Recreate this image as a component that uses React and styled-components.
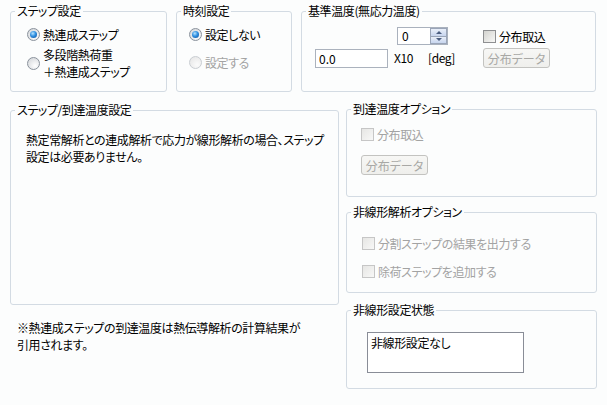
import React from 'react'
import styled, { createGlobalStyle } from 'styled-components'

const GlobalStyle = createGlobalStyle`
  html, body {
    margin: 0;
    padding: 0;
    background: #fcfdfd;
  }
  body {
    font-family: "Noto Sans CJK JP", "Noto Sans", sans-serif;
    font-size: 12px;
    color: #000;
    letter-spacing: -0.4px;
    font-feature-settings: "palt";
  }
`

const Page = styled.div`
  width: 607px;
  height: 405px;
  box-sizing: border-box;
  padding: 4px 0 0 10px;
`

const TopRow = styled.div`
  display: grid;
  grid-template-columns: 157px 116px 295px;
  column-gap: 9px;
`

const MainRow = styled.div`
  display: grid;
  grid-template-columns: 329px 251px;
  column-gap: 7px;
  margin-top: 11px;
`

const Column = styled.div`
  display: flex;
  flex-direction: column;
  margin-top: ${p => p.$mt || 0}px;
`

const Group = styled.fieldset`
  margin: ${p => p.$mt || 0}px 0 0;
  padding: 0;
  min-width: 0;
  box-sizing: border-box;
  height: ${p => p.$h}px;
  border: 1px solid #d3dbe3;
  border-radius: 3px;
`

const Legend = styled.legend`
  margin-left: 4px;
  padding: 0 2px;
  line-height: 14px;
  font-size: 12px;
`

const GroupBody = styled.div`
  display: flex;
  flex-direction: column;
  align-items: flex-start;
  gap: ${p => p.$gap || 0}px;
  padding: ${p => p.$pad};
`

const OptionRow = styled.label`
  display: flex;
  align-items: center;
  gap: 3px;
  line-height: 17px;
  white-space: nowrap;
  color: ${p => (p.$disabled ? '#a3a3a3' : '#000')};
`

const Radio = styled.span`
  position: relative;
  flex: none;
  width: 11px;
  height: 11px;
  border-radius: 50%;
  border: 1px solid ${p => (p.$disabled ? '#c9cdd2' : '#8a929c')};
  background: ${p =>
    p.$disabled
      ? 'radial-gradient(circle at 65% 70%, #fbfbfb, #e4e4e4)'
      : 'radial-gradient(circle at 65% 70%, #ffffff, #cfd2d6)'};
  &::after {
    content: '';
    display: ${p => (p.$checked ? 'block' : 'none')};
    position: absolute;
    inset: 2px;
    border-radius: 50%;
    background: radial-gradient(circle at 40% 35%, #b6e3ff 0, #2f8fe0 45%, #0b4a96 100%);
  }
`

const Check = styled.span`
  flex: none;
  width: 11px;
  height: 11px;
  border: 1px solid ${p => (p.$disabled ? '#c6c6c6' : '#8e8f91')};
  background: ${p =>
    p.$disabled
      ? 'linear-gradient(135deg, #e6e6e4, #f8f8f7)'
      : 'linear-gradient(135deg, #d3d3cf, #f8f8f6)'};
`

const Button = styled.button`
  flex: none;
  width: 67px;
  height: 20px;
  margin-top: ${p => p.$mt || 0}px;
  padding: 0;
  border: 1px solid #c3c3c0;
  border-radius: 3px;
  background: linear-gradient(#f7f7f5, #efefec);
  color: #a8a8a5;
  font: inherit;
  font-size: 12px;
  font-feature-settings: "palt";
`

const BaseGrid = styled.div`
  display: grid;
  grid-template-columns: 73px 83px auto;
  grid-template-rows: 18px 20px;
  column-gap: 6px;
  row-gap: 3px;
  align-items: center;
  padding: 9px 0 0 13px;
`

const Spinner = styled.div`
  display: flex;
  box-sizing: border-box;
  width: 51px;
  height: 18px;
  margin-left: 3px;
  border: 1px solid #a9b1bd;
  background: #fff;
`

const SpinValue = styled.span`
  flex: 1;
  padding-left: 4px;
  line-height: 16px;
`

const SpinButtons = styled.div`
  display: flex;
  flex-direction: column;
  gap: 1px;
  width: 17px;
  padding: 1px;
  box-sizing: border-box;
  background: #9aa5b8;
`

const SpinArrow = styled.span`
  flex: 1;
  display: flex;
  align-items: center;
  justify-content: center;
  background: linear-gradient(#e9eff9, #c7d5ee);
  &::before {
    content: '';
    border-left: 3px solid transparent;
    border-right: 3px solid transparent;
    ${p =>
      p.$down
        ? 'border-top: 3px solid #4a5d80;'
        : 'border-bottom: 3px solid #4a5d80;'}
  }
`

const TextBox = styled.input`
  box-sizing: border-box;
  width: 73px;
  height: 19px;
  margin: 0;
  padding: 0 3px;
  border: 1px solid #abb2bd;
  background: #fff;
  font: inherit;
  font-size: 12px;
  color: #000;
  outline: none;
`

const Units = styled.div`
  display: flex;
  gap: 15px;
  margin-top: -2px;
`

const Message = styled.p`
  margin: 0;
  line-height: 17px;
  white-space: nowrap;
  padding: ${p => p.$pad};
`

const StatusBox = styled.div`
  box-sizing: border-box;
  width: 157px;
  height: 41px;
  padding: 1px 3px;
  border: 1px solid #898d97;
  background: #fff;
  line-height: 17px;
`

function RadioOption({ checked, disabled, children }) {
  return (
    <OptionRow $disabled={disabled}>
      <Radio $checked={checked} $disabled={disabled} />
      <span>{children}</span>
    </OptionRow>
  )
}

function CheckOption({ disabled, children }) {
  return (
    <OptionRow $disabled={disabled}>
      <Check $disabled={disabled} />
      <span>{children}</span>
    </OptionRow>
  )
}

export default function App() {
  return (
    <Page>
      <GlobalStyle />
      <TopRow>
        <Group $h={88}>
          <Legend>ステップ設定</Legend>
          <GroupBody $pad="8px 0 0 16px" $gap={3}>
            <RadioOption checked>熱連成ステップ</RadioOption>
            <RadioOption>
              多段階熱荷重
              <br />
              ＋熱連成ステップ
            </RadioOption>
          </GroupBody>
        </Group>

        <Group $h={88}>
          <Legend>時刻設定</Legend>
          <GroupBody $pad="8px 0 0 12px" $gap={11}>
            <RadioOption checked>設定しない</RadioOption>
            <RadioOption disabled>設定する</RadioOption>
          </GroupBody>
        </Group>

        <Group $h={88}>
          <Legend>基準温度(無応力温度)</Legend>
          <BaseGrid>
            <span />
            <Spinner>
              <SpinValue>0</SpinValue>
              <SpinButtons>
                <SpinArrow />
                <SpinArrow $down />
              </SpinButtons>
            </Spinner>
            <CheckOption>分布取込</CheckOption>
            <TextBox readOnly value="0.0" />
            <Units>
              <span>X10</span>
              <span>[deg]</span>
            </Units>
            <Button disabled>分布データ</Button>
          </BaseGrid>
        </Group>
      </TopRow>

      <MainRow>
        <Column>
          <Group $h={202}>
            <Legend>ステップ/到達温度設定</Legend>
            <Message $pad="14px 0 0 15px">
              熱定常解析との連成解析で応力が線形解析の場合、ステップ
              <br />
              設定は必要ありません。
            </Message>
          </Group>
          <Message $pad="14px 0 0 7px">
            ※熱連成ステップの到達温度は熱伝導解析の計算結果が
            <br />
            引用されます。
          </Message>
        </Column>

        <Column $mt={-1}>
          <Group $h={95}>
            <Legend>到達温度オプション</Legend>
            <GroupBody $pad="10px 0 0 14px">
              <CheckOption disabled>分布取込</CheckOption>
              <Button disabled $mt={12}>分布データ</Button>
            </GroupBody>
          </Group>

          <Group $h={88} $mt={8}>
            <Legend>非線形解析オプション</Legend>
            <GroupBody $pad="16px 0 0 15px" $gap={11}>
              <CheckOption disabled>分割ステップの結果を出力する</CheckOption>
              <CheckOption disabled>除荷ステップを追加する</CheckOption>
            </GroupBody>
          </Group>

          <Group $h={86} $mt={10}>
            <Legend>非線形設定状態</Legend>
            <GroupBody $pad="15px 0 0 20px">
              <StatusBox>非線形設定なし</StatusBox>
            </GroupBody>
          </Group>
        </Column>
      </MainRow>
    </Page>
  )
}
